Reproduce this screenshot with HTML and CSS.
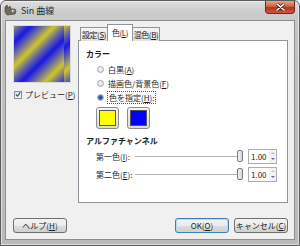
FILE: index.html
```html
<!DOCTYPE html>
<html lang="ja">
<head>
  <meta charset="UTF-8" />
  <title>Sin 曲線</title>
  <link rel="stylesheet" href="styles.css">
</head>
<body>
  <div class="window">

    <!-- Title bar -->
    <div class="titlebar">
      <svg class="app-icon" width="13" height="11" viewBox="0 0 13 11">
        <path d="M1 2 L3 0 L4 3 L6 1 L7 4 L11 4 L12 6 L11 9 L3 10 L1 7 Z" fill="#6e6a5c" stroke="#3c3a32" stroke-width="0.6"/>
        <circle cx="9" cy="6" r="1.3" fill="#fff"/>
        <circle cx="9.2" cy="6.1" r="0.6" fill="#000"/>
      </svg>
      <span class="title">Sin 曲線</span>
      <div class="close-btn">
        <svg width="9" height="8" viewBox="0 0 9 8">
          <path d="M1 1 L8 7 M8 1 L1 7" stroke="#5a1e16" stroke-width="3" stroke-linecap="round"/>
          <path d="M1 1 L8 7 M8 1 L1 7" stroke="#fff" stroke-width="1.6" stroke-linecap="round"/>
        </svg>
      </div>
    </div>

    <!-- Client area -->
    <div class="client">
      <div class="main">
        <div class="side">
          <div class="preview"></div>
          <label class="check-row">
            <span class="checkbox">
              <svg width="7" height="7" viewBox="0 0 7 7"><path d="M1 3.5 L3 5.5 L6 1" stroke="#2d4d7a" stroke-width="1.3" fill="none"/></svg>
            </span>
            <span>プレビュー(<u>P</u>)</span>
          </label>
        </div>

        <div class="notebook">
          <div class="tabs">
            <div class="tab">設定(<u>S</u>)</div>
            <div class="tab active">色(<u>L</u>)</div>
            <div class="tab">混色(<u>B</u>)</div>
          </div>
          <div class="panel">
            <div class="heading">カラー</div>
            <div class="radios">
              <div class="radio-row"><span class="radio"></span><span>白黒(<u>A</u>)</span></div>
              <div class="radio-row"><span class="radio"></span><span>描画色/背景色(<u>F</u>)</span></div>
              <div class="radio-row"><span class="radio checked"></span><span class="focus">色を指定(<u>H</u>):</span></div>
            </div>
            <div class="swatches">
              <div class="color-btn"><div class="swatch yellow"></div></div>
              <div class="color-btn"><div class="swatch blue"></div></div>
            </div>

            <div class="heading alpha">アルファチャンネル</div>
            <div class="scale-row">
              <span class="scale-label">第一色(<u>I</u>):</span>
              <div class="slider"><div class="track"></div><div class="thumb"></div></div>
              <div class="spin"><span class="spin-val">1.00</span><span class="spin-arrows"><i class="up"></i><i class="down"></i></span></div>
            </div>
            <div class="scale-row">
              <span class="scale-label">第二色(<u>E</u>):</span>
              <div class="slider"><div class="track"></div><div class="thumb"></div></div>
              <div class="spin"><span class="spin-val">1.00</span><span class="spin-arrows"><i class="up"></i><i class="down"></i></span></div>
            </div>
          </div>
        </div>
      </div>

      <div class="buttons">
        <button class="btn help">ヘルプ(<u>H</u>)</button>
        <div class="spacer"></div>
        <button class="btn default">OK(<u>O</u>)</button>
        <button class="btn">キャンセル(<u>C</u>)</button>
      </div>
    </div>
  </div>
</body>
</html>
```

FILE: styles.css
```css
* {
  margin: 0;
  padding: 0;
  box-sizing: border-box;
}

body {
  font-family: "Noto Sans CJK JP", "Noto Sans", sans-serif;
  font-size: 8px;
  color: #1e1e1e;
  background: #fff;
}

u {
  text-decoration: underline;
}

.window {
  width: 300px;
  height: 246px;
  display: flex;
  flex-direction: column;
  background: linear-gradient(180deg, #dedede 0px, #cbcbcb 12px, #c2c2c2 40px, #bababa 100%);
  border: 1px solid #5c5c5c;
  border-radius: 6px 6px 0 0;
  box-shadow: inset 0 0 0 1px rgba(255,255,255,0.5);
}

.titlebar {
  height: 19px;
  display: flex;
  align-items: center;
  padding-left: 3px;
}

.app-icon {
  margin-right: 4px;
}

.title {
  font-size: 9px;
  color: #2a2a2a;
}

.close-btn {
  margin-left: auto;
  margin-right: 4px;
  align-self: flex-start;
  width: 30px;
  height: 13px;
  display: flex;
  align-items: center;
  justify-content: center;
  background: linear-gradient(180deg, #e8a493 0%, #d0614a 45%, #b8321c 55%, #cf5a3c 100%);
  border: 1px solid #6c2a1e;
  border-top: none;
  border-radius: 0 0 4px 4px;
}

.client {
  flex: 1;
  margin: 0 4px 5px 4px;
  background: #f0f0f0;
  border: 1px solid #8e8e8e;
  display: flex;
  flex-direction: column;
  padding: 3px 6px 6px 7px;
}

.main {
  display: flex;
  gap: 7px;
}

.side {
  width: 58px;
  display: flex;
  flex-direction: column;
  margin-top: 1px;
}

.preview {
  width: 58px;
  height: 58px;
  border: 1px solid #d8d8d8;
  background: repeating-linear-gradient(135deg, #cfc52a 0px, #6868a0 8px, #1818e6 16px, #6868a0 24px, #cfc52a 33px);
  background-position: -6px 0;
}

.check-row {
  display: flex;
  align-items: center;
  gap: 3px;
  margin-top: 6px;
  margin-left: 1px;
  white-space: nowrap;
}

.checkbox {
  width: 8px;
  height: 8px;
  border: 1px solid #8a8f99;
  background: linear-gradient(#dfe3ea, #f6f7f9);
  display: flex;
  align-items: center;
  justify-content: center;
}

.notebook {
  flex: 1;
  display: flex;
  flex-direction: column;
}

.tabs {
  height: 17px;
  display: flex;
  align-items: flex-end;
  padding-left: 2px;
  margin-bottom: -1px;
  position: relative;
}

.tab {
  height: 14px;
  padding: 0;
  border: 1px solid #8e939c;
  border-bottom: none;
  background: linear-gradient(#f4f4f4, #e2e2e2);
  display: flex;
  align-items: center;
  justify-content: center;
  margin-right: -1px;
  white-space: nowrap;
  letter-spacing: -0.4px;
}

.tab:nth-child(1) {
  width: 28px;
}

.tab.active {
  height: 17px;
  width: 26px;
  background: #fff;
  position: relative;
  z-index: 1;
  padding-bottom: 2px;
}

.tab:nth-child(3) {
  width: 28px;
}

.panel {
  height: 163px;
  background: #fff;
  border: 1px solid #8e939c;
  padding: 7px 0 0 7px;
  display: flex;
  flex-direction: column;
}

.heading {
  font-weight: bold;
  line-height: 12px;
}

.radios {
  margin-top: 2px;
  margin-left: 11px;
  display: flex;
  flex-direction: column;
}

.radio-row {
  height: 14px;
  display: flex;
  align-items: center;
  gap: 4px;
}

.radio {
  width: 7px;
  height: 7px;
  border-radius: 50%;
  border: 1px solid #a4a8b0;
  background: radial-gradient(circle at 40% 40%, #f4f4f4, #d4d6da);
}

.radio.checked {
  background: radial-gradient(circle, #1b4a8c 0px, #2e6ab4 2px, #cdd4de 3px);
}

.focus {
  outline: 1px dotted #555;
  outline-offset: 0;
  padding: 0 1px;
}

.swatches {
  display: flex;
  gap: 8px;
  margin-left: 10px;
  margin-top: 3px;
}

.color-btn {
  width: 23px;
  height: 22px;
  border: 1px solid #8a8a8a;
  border-radius: 3px;
  background: linear-gradient(#f4f4f4, #dcdcdc);
  padding: 2px;
}

.swatch {
  width: 100%;
  height: 100%;
  border: 1px solid #555;
}

.yellow {
  background: #ffff00;
}

.blue {
  background: #0000ff;
}

.alpha {
  margin-top: 6px;
}

.scale-row {
  height: 18px;
  display: flex;
  align-items: center;
  margin-left: 10px;
}

.scale-label {
  width: 38px;
  white-space: nowrap;
}

.slider {
  width: 114px;
  height: 14px;
  display: flex;
  align-items: center;
}

.track {
  flex: 1;
  height: 1px;
  background: #b4b4b4;
  margin-left: 1px;
}

.thumb {
  width: 6px;
  height: 12px;
  border: 1px solid #7c7c7c;
  border-radius: 2px;
  background: linear-gradient(90deg, #f2f2f2, #d6d6d6);
  margin-right: 5px;
}

.spin {
  width: 29px;
  height: 15px;
  border: 1px solid #abadb3;
  background: #fff;
  display: flex;
  align-items: center;
}

.spin-val {
  flex: 1;
  padding-left: 2px;
}

.spin-arrows {
  width: 7px;
  height: 13px;
  display: flex;
  flex-direction: column;
  justify-content: space-around;
  align-items: center;
  background: #f3f3f3;
}

.spin-arrows i {
  width: 0;
  height: 0;
  border-left: 2px solid transparent;
  border-right: 2px solid transparent;
}

.spin-arrows .up {
  border-bottom: 2px solid #c4c4c4;
}

.spin-arrows .down {
  border-top: 2px solid #5a6fa8;
}

.buttons {
  margin-top: auto;
  display: flex;
  gap: 5px;
}

.spacer {
  flex: 1;
}

.btn {
  width: 54px;
  height: 15px;
  font-family: "Noto Sans CJK JP", "Noto Sans", sans-serif;
  font-size: 8px;
  color: #1e1e1e;
  border: 1px solid #707070;
  border-radius: 3px;
  background: linear-gradient(#f2f2f2 0%, #ebebeb 50%, #dddddd 51%, #cfcfcf 100%);
  display: flex;
  align-items: center;
  justify-content: center;
}

.btn.default {
  border-color: #3c7fb1;
  box-shadow: inset 0 0 0 1px #b4daf5;
}
```
